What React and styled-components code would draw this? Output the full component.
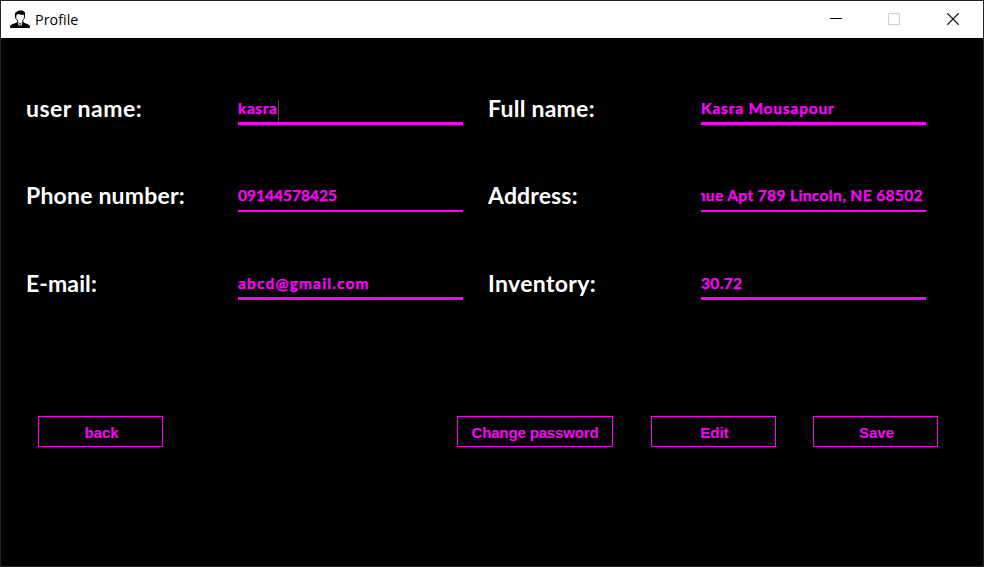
import React from "react";
import styled, { createGlobalStyle } from "styled-components";

const MAGENTA = "#ff00ff";

const GlobalStyle = createGlobalStyle`
  * { box-sizing: border-box; }
  body { margin: 0; background: #000; overflow: hidden; }
`;

const Window = styled.div`
  display: flex;
  flex-direction: column;
  width: 984px;
  height: 567px;
  border: 1px solid #242528;
  background: #000;
`;

const TitleBar = styled.header`
  display: flex;
  align-items: center;
  flex: 0 0 37px;
  padding-left: 9px;
  background: #fff;
`;

const Title = styled.h1`
  flex: 1;
  margin: 0 0 0 5px;
  font: 400 14.3px/20px "Open Sans", "Noto Sans", sans-serif;
  letter-spacing: 0.05px;
  color: #000;
`;

const WindowButton = styled.button`
  display: flex;
  align-items: center;
  justify-content: center;
  width: ${(p) => p.$width}px;
  height: 37px;
  padding: 0 0 1px;
  border: 0;
  background: none;
  color: ${(p) => (p.disabled ? "#ccc" : "#000")};
`;

const WindowButtons = styled.div`
  display: flex;
`;

const Form = styled.form`
  display: flex;
  flex-direction: column;
  flex: 1;
`;

const Fields = styled.div`
  display: grid;
  grid-template-columns: 212px 250px 213px 225px;
  grid-template-rows: 87px 87px 88px;
  align-items: end;
  padding-left: 25px;
`;

const Label = styled.label`
  padding-bottom: ${(p) => p.$drop}px;
  font: 700 23px/28px Lato, "Open Sans", sans-serif;
  letter-spacing: ${(p) => p.$tracking || 0}px;
  white-space: nowrap;
  color: #fff;
`;

const Field = styled.div`
  display: flex;
  align-items: flex-start;
  justify-content: ${(p) => (p.$scrolled ? "flex-end" : "flex-start")};
  width: 225px;
  height: 27px;
  padding-right: ${(p) => (p.$scrolled ? 3 : 0)}px;
  border-bottom: ${(p) => p.$line}px solid ${MAGENTA};
  overflow: hidden;
`;

const Value = styled.span`
  font: 700 15.5px/20px Lato, "Open Sans", sans-serif;
  letter-spacing: ${(p) => p.$tracking}px;
  -webkit-text-stroke: 0.25px ${MAGENTA};
  white-space: nowrap;
  color: ${MAGENTA};
`;

const Caret = styled.span`
  width: 1px;
  height: 22px;
  margin-top: 2px;
  background: #444;
`;

const Actions = styled.div`
  display: flex;
  margin-top: 116px;
  padding-left: 37px;
`;

const ActionButton = styled.button`
  width: ${(p) => p.$width || 125}px;
  height: 31px;
  margin-left: ${(p) => p.$gap || 0}px;
  padding: 3px 0 0 ${(p) => (p.$width ? 0 : 2)}px;
  border: 1px solid ${MAGENTA};
  background: #000;
  font: 700 15px/20px "Liberation Sans", Arial, sans-serif;
  letter-spacing: ${(p) => p.$tracking || 0}px;
  white-space: nowrap;
  color: ${MAGENTA};
`;

const IconSlot = styled.span`
  display: flex;
  padding-bottom: 1px;
`;

const UserIcon = () => (
  <svg width="20" height="18" viewBox="0 0 20 18">
    <path d="M5 7V3L7 1.5 9 .5H12.5L15 2.5V6L14.3 8 13.7 4.5 12 5 8 4 6.5 5 6 8Z" />
    <path d="M5.5 6.5 6 9 7.5 10V12M14.5 6.5 14 9 12.8 10V12" fill="none" stroke="#000" strokeWidth="1" strokeDasharray="2.4 .5" />
    <path d="M0 18V16L2 14.3 6.5 12.7 7.5 11.2 9.2 13.2H11.2L13 11.2 14 12.7 18 14.3 20 16V18Z" />
    <path d="m7.5 12.6 1.7 4 .6-2.6Zm5.2 0-1.7 4-.6-2.6Z" fill="#fff" />
  </svg>
);

const FIELDS = [
  { label: "user name:", spacing: 0.5, value: "kasra", line: 3, drop: 3, tracking: 0.6, caret: true },
  { label: "Full name:", spacing: 0.25, value: "Kasra Mousapour", line: 3, drop: 3, tracking: 0.8 },
  { label: "Phone number:", spacing: 0.2, value: "09144578425", line: 2, drop: 3, tracking: 0 },
  { label: "Address:", spacing: 0.15, value: "1234 Elm Avenue Apt 789 Lincoln, NE 68502", line: 2, drop: 3, tracking: 0.38, scrolled: true },
  { label: "E-mail:", spacing: 0.1, value: "abcd@gmail.com", line: 3, drop: 3, tracking: 1.15 },
  { label: "Inventory:", spacing: 0.35, value: "30.72", line: 3, drop: 3, tracking: 0.35 },
];

export default function App() {
  return (
    <>
      <GlobalStyle />
      <Window>
        <TitleBar>
          <IconSlot><UserIcon /></IconSlot>
          <Title>Profile</Title>
          <WindowButtons>
            <WindowButton type="button" $width={58} aria-label="Minimize">
              <svg width="12" height="12"><path d="M0 5.5H12" stroke="currentColor" /></svg>
            </WindowButton>
            <WindowButton type="button" $width={58} disabled aria-label="Maximize">
              <svg width="12" height="12"><path d="M.5.5H11.5V11.5H.5Z" fill="none" stroke="currentColor" /></svg>
            </WindowButton>
            <WindowButton type="button" $width={60} aria-label="Close">
              <svg width="12" height="12"><path d="M.3.3 11.7 11.7M11.7.3.3 11.7" stroke="currentColor" strokeWidth="1.2" /></svg>
            </WindowButton>
          </WindowButtons>
        </TitleBar>
        <Form>
          <Fields>
            {FIELDS.map((f) => (
              <React.Fragment key={f.label}>
                <Label $drop={f.drop} $tracking={f.spacing}>{f.label}</Label>
                <Field $line={f.line} $scrolled={f.scrolled}>
                  <Value $tracking={f.tracking}>{f.value}</Value>
                  {f.caret && <Caret />}
                </Field>
              </React.Fragment>
            ))}
          </Fields>
          <Actions>
            <ActionButton type="button">back</ActionButton>
            <ActionButton type="button" $width={156} $gap={294} $tracking={-0.14}>Change password</ActionButton>
            <ActionButton type="button" $gap={38}>Edit</ActionButton>
            <ActionButton type="button" $gap={37}>Save</ActionButton>
          </Actions>
        </Form>
      </Window>
    </>
  );
}
